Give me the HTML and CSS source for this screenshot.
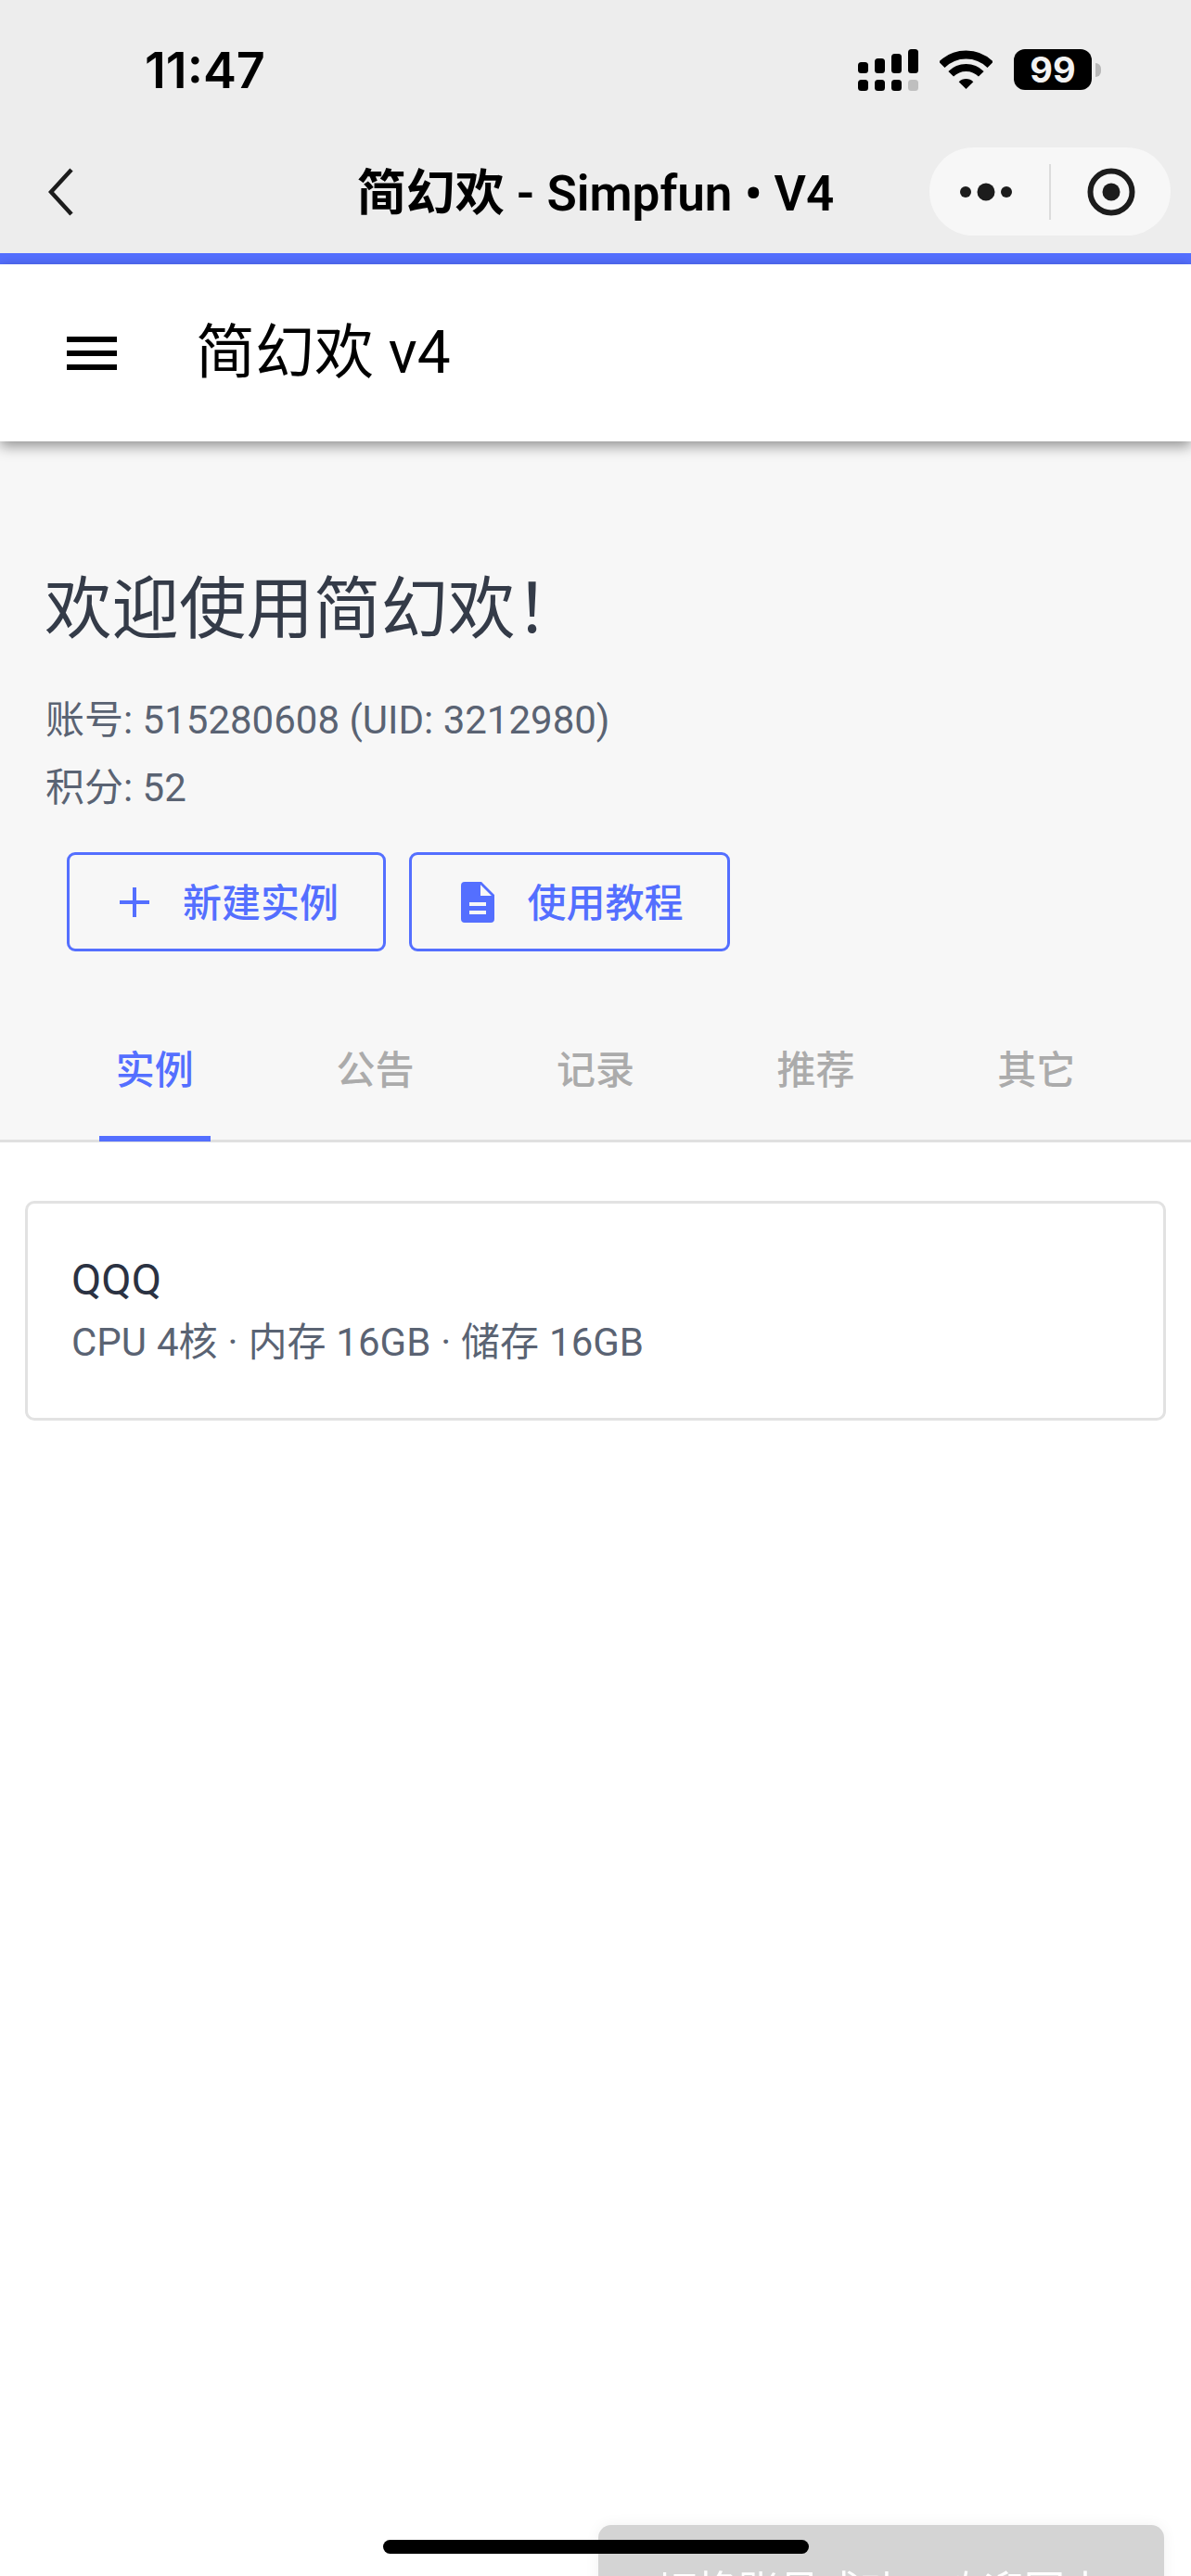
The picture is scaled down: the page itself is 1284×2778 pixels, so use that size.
FILE: index.html
```html
<!DOCTYPE html>
<html lang="zh-CN">
<head>
    <meta charset="UTF-8">
    <meta name="viewport" content="width=device-width, initial-scale=1.0">
    <title>简幻欢 - Simpfun • V4</title>
    <link rel="stylesheet" href="styles.css">
</head>
<body>

    <div class="topbar">
        <div class="status">
            <span class="time">11:47</span>
            <div class="status-icons">
                <svg class="signal" width="65" height="45" viewBox="0 0 65 45">
                    <rect x="0" y="14" width="11" height="12" rx="3.5"/>
                    <rect x="18" y="10" width="11" height="16" rx="3.5"/>
                    <rect x="36" y="5" width="11" height="21" rx="3.5"/>
                    <rect x="54" y="0" width="11" height="26" rx="3.5"/>
                    <rect x="0" y="33" width="11" height="12" rx="3.5"/>
                    <rect x="18" y="33" width="11" height="12" rx="3.5"/>
                    <rect x="36" y="33" width="11" height="12" rx="3.5"/>
                    <rect x="54" y="33" width="11" height="12" rx="3.5" fill="#bfbfbf"/>
                </svg>
                <svg class="wifi" width="57" height="42" viewBox="0 0 57 42">
                    <path d="M2.3 15.8A37 37 0 0 1 54.7 15.8" fill="none" stroke="#000" stroke-width="9"/>
                    <path d="M12.2 25.7A23 23 0 0 1 44.8 25.7" fill="none" stroke="#000" stroke-width="8"/>
                    <path d="M28.5 42L20.7 34.2A11 11 0 0 1 36.3 34.2Z"/>
                </svg>
                <div class="battery">
                    <span class="battery-level">99</span>
                    <span class="battery-nub"></span>
                </div>
            </div>
        </div>
        <div class="nav">
            <svg class="back" width="28" height="52" viewBox="0 0 28 52">
                <path d="M25 2L3 26L25 50" fill="none" stroke="#1c1c1c" stroke-width="4.5"/>
            </svg>
            <div class="nav-title">简幻欢 - Simpfun • V4</div>
            <div class="capsule">
                <div class="capsule-part">
                    <svg width="64" height="24" viewBox="0 0 64 24">
                        <circle cx="6" cy="12" r="6" fill="#1c1c1c"/>
                        <circle cx="28" cy="12" r="9.5" fill="#1c1c1c"/>
                        <circle cx="50" cy="12" r="6" fill="#1c1c1c"/>
                    </svg>
                </div>
                <div class="capsule-line"></div>
                <div class="capsule-part">
                    <svg width="52" height="52" viewBox="0 0 52 52">
                        <circle cx="26" cy="26" r="22.5" fill="none" stroke="#1c1c1c" stroke-width="6"/>
                        <circle cx="26" cy="26" r="9.5" fill="#1c1c1c"/>
                    </svg>
                </div>
            </div>
        </div>
    </div>
    <div class="progress"></div>

    <header class="appbar">
        <div class="menu-icon">
            <span></span>
            <span></span>
            <span></span>
        </div>
        <div class="appbar-title">简幻欢 v4</div>
    </header>

    <section class="hero">
        <h1>欢迎使用简幻欢！</h1>
        <p class="info">账号: 515280608 (UID: 3212980)</p>
        <p class="info">积分: 52</p>
        <div class="actions">
            <button class="btn btn-new">
                <svg width="32" height="32" viewBox="0 0 32 32">
                    <path d="M16 0V32M0 16H32" fill="none" stroke="#546fff" stroke-width="4"/>
                </svg>
                <span>新建实例</span>
            </button>
            <button class="btn btn-doc">
                <svg width="36" height="44" viewBox="0 0 36 44">
                    <path fill-rule="evenodd" fill="#546fff" d="M4 0H22L36 14V40A4 4 0 0 1 32 44H4A4 4 0 0 1 0 40V4A4 4 0 0 1 4 0ZM21 3V15H33ZM9 22V26H27V22ZM9 31V35H27V31Z"/>
                </svg>
                <span>使用教程</span>
            </button>
        </div>
        <nav class="tabs">
            <a class="tab active">实例</a>
            <a class="tab">公告</a>
            <a class="tab">记录</a>
            <a class="tab">推荐</a>
            <a class="tab">其它</a>
        </nav>
    </section>

    <main class="content">
        <div class="card">
            <div class="card-name">QQQ</div>
            <div class="card-spec">CPU 4核 · 内存 16GB · 储存 16GB</div>
        </div>
    </main>

    <div class="toast">切换账号成功，欢迎回来</div>
    <div class="home-bar"></div>

</body>
</html>
```

FILE: styles.css
```css
html, body {
    height: 2778px;
    overflow: hidden;
}
body {
    margin: 0;
    padding: 0;
    background: #fff;
    font-family: Roboto, "Noto Sans CJK SC", sans-serif;
}
svg {
    display: block;
}

/* wechat chrome */
.topbar {
    height: 273px;
    background: #ededed;
    box-sizing: border-box;
    padding-top: 53px;
}
.status {
    display: flex;
    justify-content: space-between;
    align-items: flex-start;
    height: 106px;
    padding: 0 97px 0 156px;
}
.time {
    font-family: Inter, sans-serif;
    font-size: 54px;
    font-weight: 600;
    line-height: 46px;
    color: #000;
}
.status-icons {
    display: flex;
    align-items: flex-start;
}
.signal {
    margin-right: 23px;
}
.wifi {
    margin-top: 1px;
    margin-right: 23px;
}
.battery {
    display: flex;
    align-items: center;
}
.battery-level {
    width: 84px;
    height: 44px;
    border-radius: 12px;
    background: #000;
    color: #f2f2f2;
    font-family: Inter, sans-serif;
    font-size: 38px;
    font-weight: 700;
    line-height: 44px;
    text-align: center;
}
.battery-nub {
    width: 6px;
    height: 15px;
    margin-left: 4px;
    border-radius: 0 8px 8px 0;
    background: #b8b8b8;
}
.nav {
    display: grid;
    grid-template-columns: 1fr auto 1fr;
    align-items: center;
    height: 95px;
    padding: 0 22px;
}
.back {
    margin-left: 30px;
}
.nav-title {
    padding-bottom: 5px;
    font-size: 53px;
    font-weight: 600;
    color: #000;
    white-space: nowrap;
}
.capsule {
    justify-self: end;
    display: flex;
    align-items: center;
    width: 260px;
    height: 95px;
    border-radius: 48px;
    background: #f7f7f7;
}
.capsule-part {
    flex: 1;
    display: flex;
    justify-content: center;
}
.capsule-line {
    width: 2px;
    height: 60px;
    background: #dcdcdc;
}
.progress {
    height: 12px;
    background: #546fff;
}

/* app bar */
.appbar {
    position: relative;
    display: flex;
    align-items: center;
    height: 191px;
    padding-left: 72px;
    background: #fff;
    box-shadow: 0 5px 14px rgba(0, 0, 0, 0.42);
}
.menu-icon {
    display: flex;
    flex-direction: column;
    gap: 9px;
    width: 54px;
    margin-right: 85px;
}
.menu-icon span {
    height: 6px;
    background: #000;
}
.appbar-title {
    padding-bottom: 14px;
    font-size: 64px;
    color: #000;
}

/* welcome block */
.hero {
    height: 756px;
    box-sizing: border-box;
    padding-top: 137px;
    background: #f7f7f7;
    border-bottom: 3px solid #e0e0e0;
}
h1 {
    margin: 0 0 37px 48px;
    font-size: 72.5px;
    font-weight: 400;
    line-height: 90px;
    color: #343b48;
}
.info {
    margin: 0 0 0 49px;
    font-size: 42px;
    line-height: 73px;
    color: #5a6373;
}
.actions {
    display: flex;
    gap: 25px;
    margin: 33px 0 0 72px;
}
.btn {
    display: flex;
    align-items: center;
    justify-content: center;
    height: 107px;
    padding: 0 0 0 6px;
    background: none;
    border: 3px solid #546fff;
    border-radius: 9px;
    color: #546fff;
    font-family: inherit;
    font-size: 42px;
    font-weight: 500;
}
.btn span {
    padding-bottom: 5px;
}
.btn-new {
    width: 344px;
    gap: 36px;
}
.btn-doc {
    width: 346px;
    gap: 35px;
}
.tabs {
    display: flex;
    margin-top: 68px;
    padding: 0 48px;
}
.tab {
    flex: 1;
    height: 137px;
    box-sizing: border-box;
    display: flex;
    justify-content: center;
    padding-top: 26px;
    font-size: 42px;
    font-weight: 500;
    color: #ababab;
}
.tab.active {
    color: #546fff;
    background: linear-gradient(#546fff, #546fff) center bottom / 120px 6px no-repeat;
}

/* instance list */
.content {
    padding: 63px 27px 0;
}
.card {
    height: 237px;
    box-sizing: border-box;
    padding: 52px 47px 0;
    border: 3px solid #e2e2e2;
    border-radius: 10px;
}
.card-name {
    font-size: 47px;
    line-height: 60px;
    color: #2b3242;
}
.card-spec {
    margin-top: 9px;
    font-size: 42px;
    line-height: 58px;
    word-spacing: 0.5px;
    color: #5a6373;
}

/* overlays */
.toast {
    position: fixed;
    left: 645px;
    top: 2723px;
    width: 610px;
    height: 120px;
    box-sizing: border-box;
    padding-top: 42px;
    border-radius: 14px;
    background: #d4d4d4;
    box-shadow: 0 0 16px rgba(0, 0, 0, 0.06);
    color: #fff;
    font-size: 44px;
    line-height: 60px;
    text-align: center;
}
.home-bar {
    position: fixed;
    left: 413px;
    top: 2739px;
    width: 459px;
    height: 15px;
    border-radius: 8px;
    background: #000;
}
```
